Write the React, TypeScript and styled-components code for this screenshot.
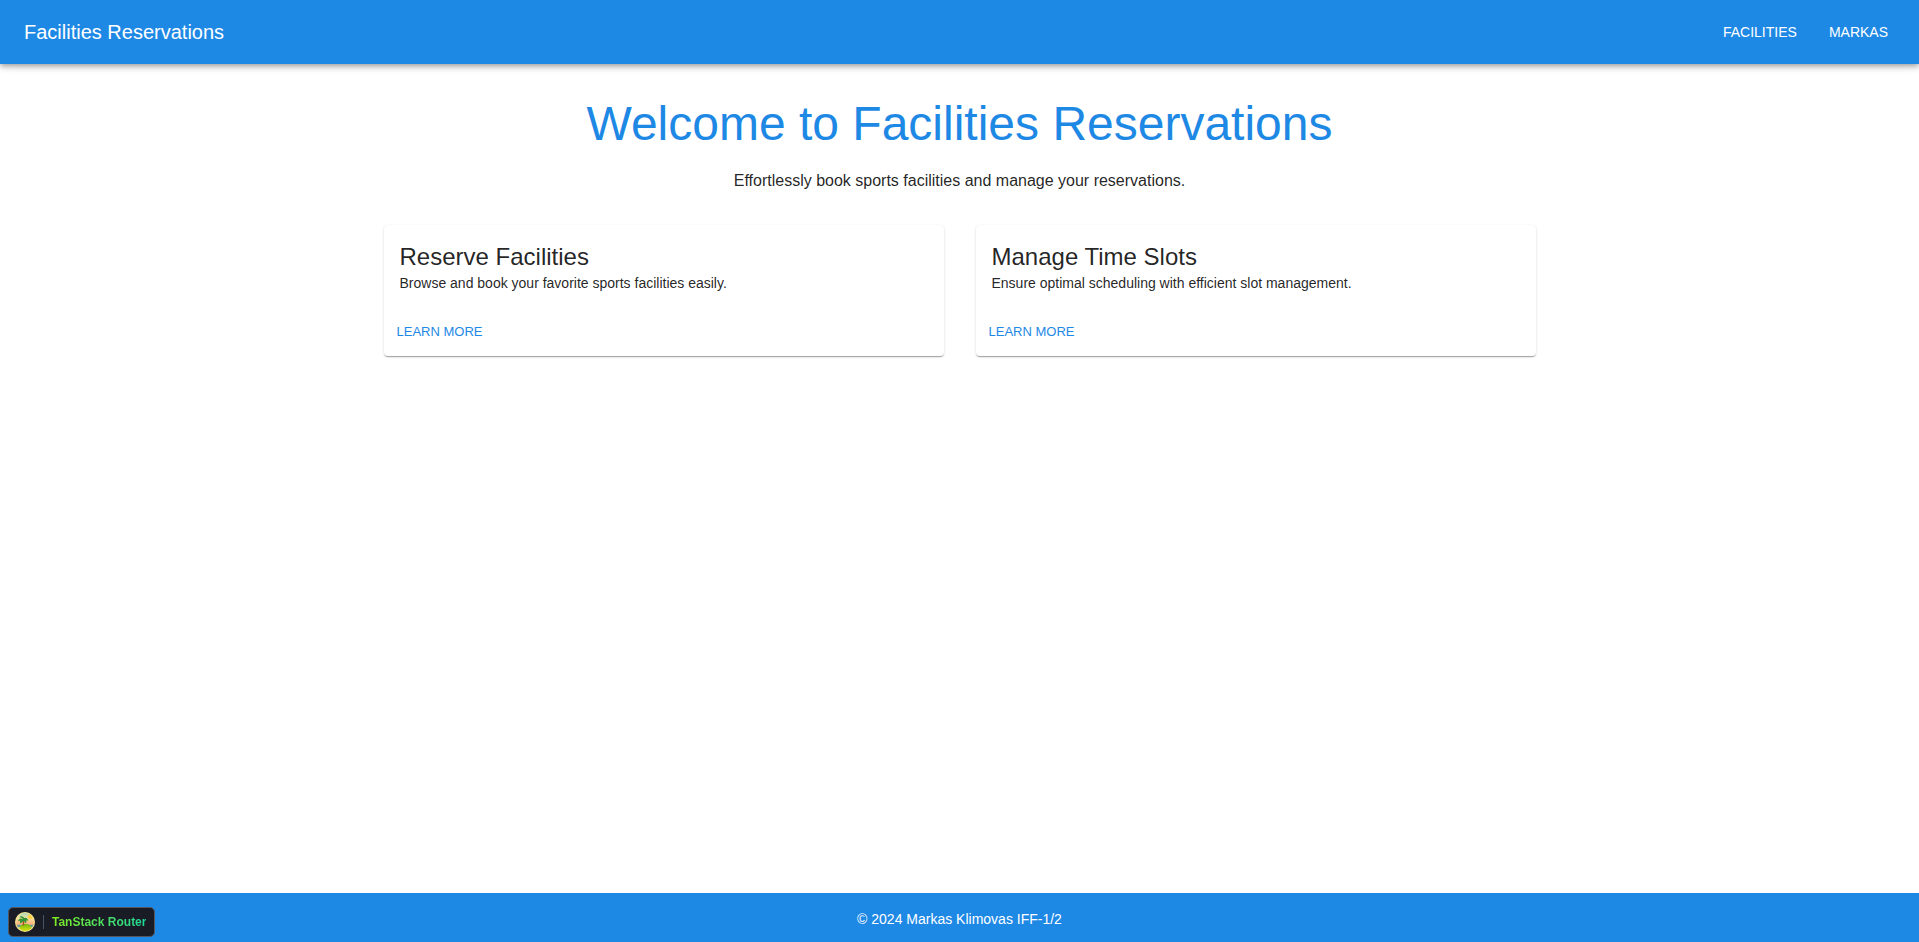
import React from 'react';
import styled, { createGlobalStyle } from 'styled-components';

const blue = '#1e88e5';
const ink = 'rgba(0, 0, 0, 0.87)';

const GlobalStyle = createGlobalStyle`
  *, *::before, *::after { box-sizing: border-box; }
  body {
    margin: 0;
    background: #fff;
    color: ${ink};
    font-family: Arial, "Liberation Sans", sans-serif;
    font-size: 16px;
    line-height: 24px;
  }
`;

const Page = styled.div`
  display: flex;
  flex-direction: column;
  min-height: 100vh;
`;

const AppBar = styled.header`
  display: flex;
  align-items: center;
  justify-content: space-between;
  min-height: 64px;
  padding: 0 23px 0 24px;
  background: ${blue};
  color: #fff;
  box-shadow:
    0 2px 4px -1px rgba(0, 0, 0, 0.2),
    0 4px 5px 0 rgba(0, 0, 0, 0.14),
    0 1px 10px 0 rgba(0, 0, 0, 0.12);
`;

const Brand = styled.a`
  color: inherit;
  font-size: 20px;
  line-height: 32px;
  text-decoration: none;
`;

const Nav = styled.nav`
  display: flex;
  gap: 16px;
`;

const NavButton = styled.button`
  padding: 6px 8px;
  border: 0;
  border-radius: 4px;
  background: transparent;
  color: inherit;
  font: inherit;
  font-size: 14px;
  text-transform: uppercase;
  cursor: pointer;
`;

const Main = styled.main`
  flex: 1;
  width: 100%;
  max-width: 1200px;
  margin: 0 auto;
  padding: 32px 24px;
`;

const Title = styled.h1`
  margin: 0 0 17px;
  color: ${blue};
  font-size: 48px;
  font-weight: 400;
  line-height: 56px;
  text-align: center;
`;

const Lead = styled.p`
  margin: 0 0 32px;
  text-align: center;
`;

const CardGrid = styled.div`
  display: grid;
  grid-template-columns: repeat(auto-fit, minmax(320px, 1fr));
  gap: 32px;
`;

const Card = styled.article`
  border-radius: 4px;
  background: #fff;
  box-shadow:
    0 2px 1px -1px rgba(0, 0, 0, 0.2),
    0 1px 1px 0 rgba(0, 0, 0, 0.14),
    0 1px 3px 0 rgba(0, 0, 0, 0.12);
`;

const CardContent = styled.div`
  padding: 16px;
`;

const CardTitle = styled.h2`
  margin: 0;
  font-size: 24px;
  font-weight: 400;
  line-height: 32px;
`;

const CardText = styled.p`
  margin: 0;
  font-size: 14px;
  line-height: 20px;
`;

const CardActions = styled.div`
  display: flex;
  padding: 8px;
`;

const CardLink = styled.a`
  padding: 4px 5px 5px;
  color: ${blue};
  font-size: 13px;
  line-height: 22px;
  text-decoration: none;
  text-transform: uppercase;
`;

const Footer = styled.footer`
  padding: 16px 16px 13px;
  background: ${blue};
  color: #fff;
  font-size: 14px;
  line-height: 20px;
  text-align: center;
`;

const RouterBadge = styled.button`
  position: fixed;
  left: 8px;
  bottom: 5px;
  display: flex;
  align-items: center;
  gap: 8px;
  height: 30px;
  padding: 4px 8px 4px 6px;
  border: 1px solid #55565f;
  border-radius: 5px;
  background: #191c24;
  font: inherit;
  font-size: 12px;
  font-weight: 700;
  line-height: 16px;
  cursor: pointer;
`;

const Divider = styled.span`
  width: 1px;
  height: 14px;
  background: #475467;
`;

const BadgeLabel = styled.span`
  background: linear-gradient(to right, #80ea22, #1fd99a);
  background-clip: text;
  -webkit-background-clip: text;
  color: transparent;
`;

const IslandLogo = () => (
  <svg width="20" height="20" viewBox="0 0 20 20" aria-hidden="true">
    <defs>
      <linearGradient id="sky" x1="0" y1="0" x2="0" y2="1">
        <stop offset="0" stopColor="#8fd8c4" />
        <stop offset="0.3" stopColor="#f8e3a0" />
        <stop offset="0.6" stopColor="#ffb37c" />
      </linearGradient>
      <linearGradient id="isle" x1="0" y1="0" x2="0" y2="1">
        <stop offset="0" stopColor="#6fb80c" />
        <stop offset="0.7" stopColor="#c5dc10" />
      </linearGradient>
      <clipPath id="disc"><circle cx="10" cy="10" r="9" /></clipPath>
    </defs>
    <circle cx="10" cy="10" r="10" fill="#fbe58e" />
    <g clipPath="url(#disc)">
      <rect width="20" height="20" fill="url(#sky)" />
      <circle cx="15.5" cy="4.5" r="2.5" fill="#ffd03f" />
      <path d="M0 12.8h20v3H0z" fill="#5e9b9c" />
      <path d="M0 15.2h20v5H0z" fill="#f7e8a0" />
      <ellipse cx="10.5" cy="16" rx="6" ry="4" fill="url(#isle)" />
      <path d="M8 7.500c.8 2 .7 4 .3 6" fill="none" stroke="#a65320" strokeWidth="1.500" />
      <path d="M8 7.500C6 5.500 3.500 6.500 3 9.500 4 8.800 4.600 8.600 5.300 8.700 4.800 9.600 4.800 10.600 5.300 11.500 6.300 10.900 7.500 10.200 8.200 9c1 .4 2 1.200 2.600 2.400 1-1 .8-2.200.2-2.900.9-.1 1.500 0 2.300.5C13 6.300 11.200 5 9.200 6 8 4 5.500 3.700 4.200 5.200 6 5.300 7.300 6 8 7.500z" fill="#349536" />
    </g>
  </svg>
);

const features = [
  { title: 'Reserve Facilities', text: 'Browse and book your favorite sports facilities easily.', href: '#facilities' },
  { title: 'Manage Time Slots', text: 'Ensure optimal scheduling with efficient slot management.', href: '#time-slots' },
];

export default function App() {
  return (
    <Page>
      <GlobalStyle />
      <AppBar>
        <Brand href="#home">Facilities Reservations</Brand>
        <Nav>
          <NavButton type="button">Facilities</NavButton>
          <NavButton type="button">Markas</NavButton>
        </Nav>
      </AppBar>
      <Main>
        <Title>Welcome to Facilities Reservations</Title>
        <Lead>Effortlessly book sports facilities and manage your reservations.</Lead>
        <CardGrid>
          {features.map(({ title, text, href }) => (
            <Card key={title}>
              <CardContent>
                <CardTitle>{title}</CardTitle>
                <CardText>{text}</CardText>
              </CardContent>
              <CardActions>
                <CardLink href={href}>Learn More</CardLink>
              </CardActions>
            </Card>
          ))}
        </CardGrid>
      </Main>
      <Footer>© 2024 Markas Klimovas IFF-1/2</Footer>
      <RouterBadge type="button">
        <IslandLogo />
        <Divider />
        <BadgeLabel>TanStack Router</BadgeLabel>
      </RouterBadge>
    </Page>
  );
}
